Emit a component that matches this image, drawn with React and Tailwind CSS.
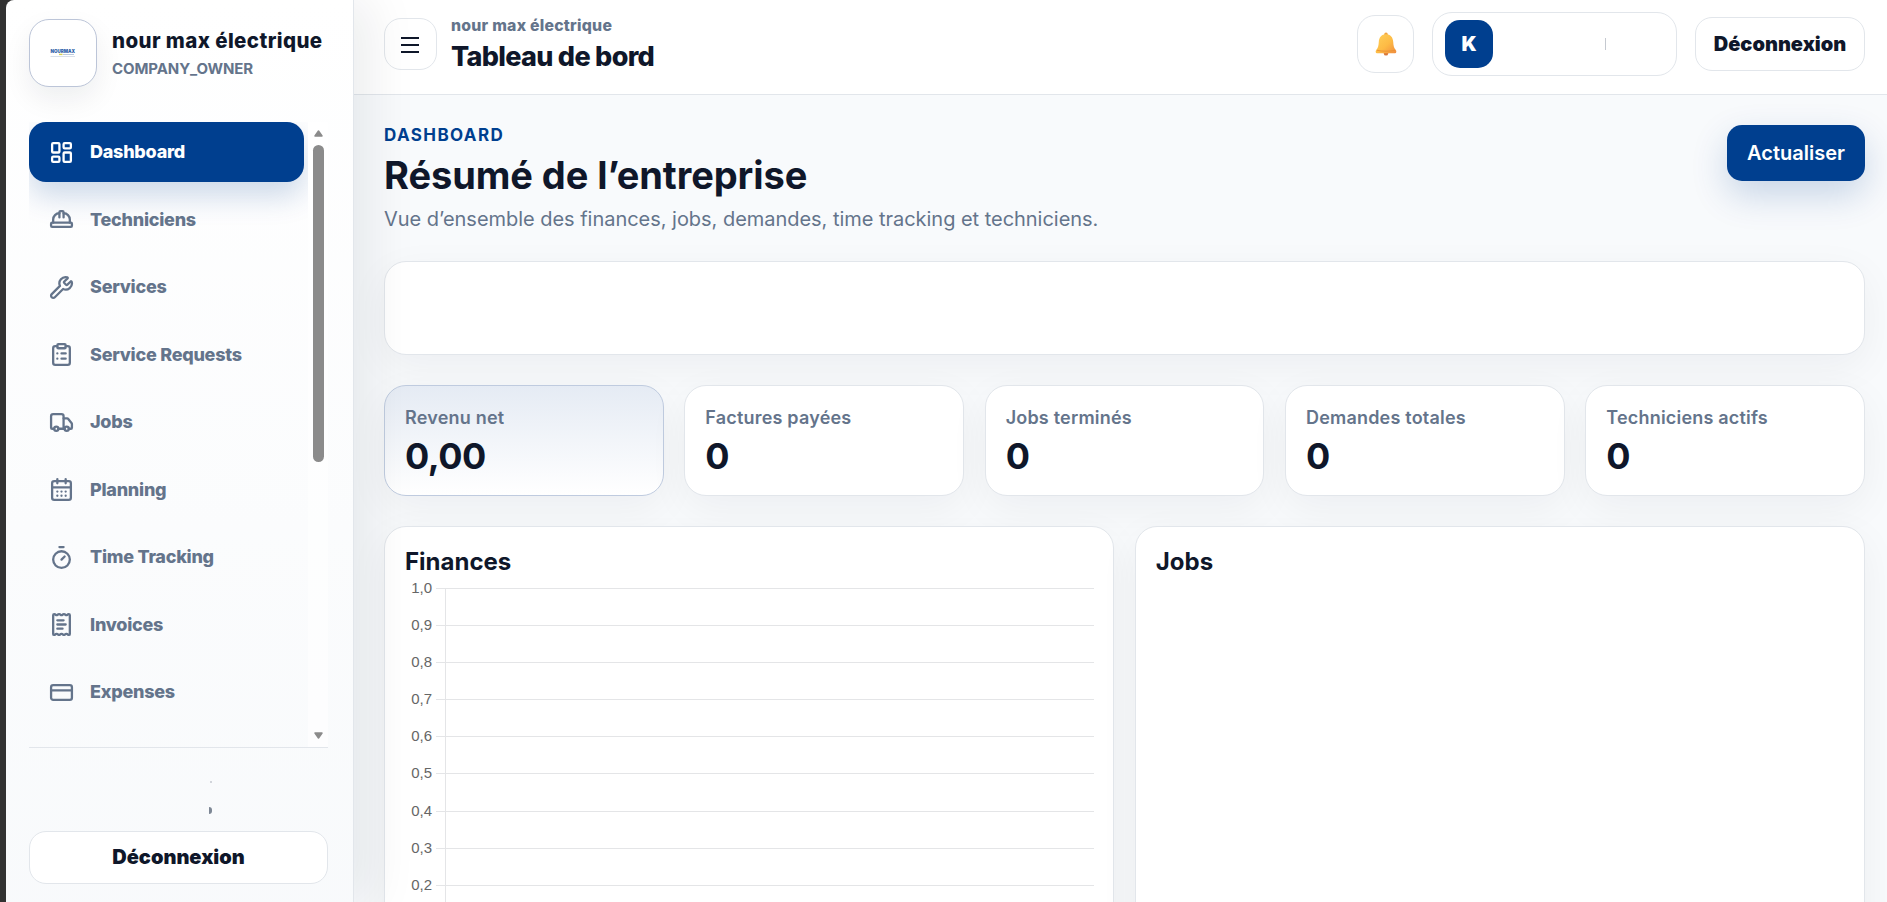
import {
  CalendarDays,
  ClipboardList,
  CreditCard,
  HardHat,
  LayoutDashboard,
  ReceiptText,
  Timer,
  Truck,
  Wrench,
} from 'lucide-react'

const NAV_ITEMS = [
  { label: 'Dashboard', icon: LayoutDashboard, active: true },
  { label: 'Techniciens', icon: HardHat },
  { label: 'Services', icon: Wrench },
  { label: 'Service Requests', icon: ClipboardList },
  { label: 'Jobs', icon: Truck },
  { label: 'Planning', icon: CalendarDays },
  { label: 'Time Tracking', icon: Timer },
  { label: 'Invoices', icon: ReceiptText },
  { label: 'Expenses', icon: CreditCard },
]

const STATS = [
  { label: 'Revenu net', value: '0,00', highlight: true },
  { label: 'Factures payées', value: '0' },
  { label: 'Jobs terminés', value: '0' },
  { label: 'Demandes totales', value: '0' },
  { label: 'Techniciens actifs', value: '0' },
]

const TICKS = ['1,0', '0,9', '0,8', '0,7', '0,6', '0,5', '0,4', '0,3', '0,2']

function CompanyLogo() {
  return (
    <svg width="28" height="16" viewBox="0 0 28 16">
      <text x="1.5" y="8.2" textLength="24.5" lengthAdjust="spacingAndGlyphs" fontSize="5" fontWeight="900" fill="#2f5fa8">
        NOURMAX
      </text>
      <path d="M10 9.400h3.500" stroke="#d5cf55" strokeWidth="1.4" />
      <path d="M14 9.500h11" stroke="#a9bcd6" strokeWidth="0.8" />
      <path d="M1.500 11.500h24.500" stroke="#cfd8e4" strokeWidth="0.8" />
    </svg>
  )
}

function BellIcon() {
  return (
    <svg width="22" height="24" viewBox="0 0 22 24">
      <defs>
        <linearGradient id="bell" x1="0" y1="0" x2="1" y2="1">
          <stop offset="0" stopColor="#ffd05a" />
          <stop offset="0.55" stopColor="#fdbb45" />
          <stop offset="1" stopColor="#f08c3e" />
        </linearGradient>
      </defs>
      <circle cx="11" cy="21.4" r="2.2" fill="#d9783a" />
      <circle cx="11" cy="2.4" r="1.8" fill="#f3a53f" />
      <path
        d="M11 2.200c-4.600 0-7 3.400-7.200 7.600-.2 4.200-.8 6.200-2.600 8.100-.9 1-.7 3.300.8 3.300h18c1.500 0 1.700-2.300.8-3.300-1.800-1.900-2.400-3.900-2.600-8.100C18 5.600 15.600 2.200 11 2.200z"
        fill="url(#bell)"
      />
      <path d="M2 18.300c5 1.200 13 1.200 18 0" stroke="#e98f35" strokeWidth="0.9" fill="none" />
    </svg>
  )
}

function Sidebar() {
  return (
    <aside className="relative z-10 flex w-[348px] shrink-0 flex-col rounded-tl-lg border-r border-[#e2e6eb] bg-gradient-to-b from-white to-slate-50 pl-[23px] pr-[25px] shadow-[16px_0_50px_rgba(15,23,42,0.08)]">
      <div className="flex items-center gap-[15px] pt-[19px]">
        <div className="flex size-[68px] shrink-0 items-center justify-center rounded-[20px] border border-[#bcc5d8] bg-white shadow-[0_12px_28px_rgba(15,23,42,0.07)]">
          <CompanyLogo />
        </div>
        <div className="whitespace-nowrap">
          <p className="text-[20.500px] font-extrabold leading-[27px] tracking-[0.400px] text-[#0f172a]">nour max électrique</p>
          <p className="mt-[4px] text-[15px] font-bold leading-[22px] tracking-[-0.100px] text-[#64748b]">COMPANY_OWNER</p>
        </div>
      </div>

      <div className="mt-[35px] flex h-[626px] border-b border-[#e2e6eb]">
        <nav className="flex h-full w-[279px] flex-col gap-[7.500px] overflow-hidden">
          {NAV_ITEMS.map(({ label, icon: Icon, active }) => (
            <a
              key={label}
              className={
                active
                  ? 'flex h-[60px] w-[275px] shrink-0 items-center gap-4 rounded-[17px] bg-[#003f8f] pl-5 text-white shadow-[0_14px_30px_rgba(0,63,143,0.2)]'
                  : 'flex h-[60px] w-[275px] shrink-0 items-center gap-4 rounded-[17px] pl-5 text-[#64748b]'
              }
            >
              <Icon size={25} strokeWidth={2.2} />
              <span className="-mt-px whitespace-nowrap text-[18px] font-extrabold tracking-[-0.250px]">{label}</span>
            </a>
          ))}
        </nav>
        <div className="flex w-5 flex-col items-center bg-white/60 pt-2">
          <svg width="9" height="7" viewBox="0 0 9 7" className="shrink-0">
            <path d="M4.500 1 8 6H1z" fill="#8b8b8b" stroke="#8b8b8b" strokeWidth="1.500" strokeLinejoin="round" />
          </svg>
          <div className="mt-2 h-[317px] w-[11px] shrink-0 rounded-full bg-[#8b8b8b]" />
          <svg width="9" height="7" viewBox="0 0 9 7" className="mb-2 mt-auto shrink-0">
            <path d="M4.500 6 8 1H1z" fill="#8b8b8b" stroke="#8b8b8b" strokeWidth="1.500" strokeLinejoin="round" />
          </svg>
        </div>
      </div>

      <div className="flex h-[83px] flex-col items-end gap-6 pr-[116px] pt-[33px]">
        <span className="size-[2px] rounded-full bg-[#c5c9d0]" />
        <span className="h-[7px] w-[3px] rounded-r-full bg-[#7d8795]" />
      </div>
      <button
        type="button"
        className="h-[53px] shrink-0 rounded-[17px] border border-[#e2e6eb] bg-white pb-0.5 text-[20px] font-black text-[#0f172a]"
      >
        Déconnexion
      </button>
    </aside>
  )
}

function Topbar() {
  return (
    <header className="flex h-[95px] shrink-0 items-start border-b border-[#e2e6eb] bg-white pl-[30px] pr-[22px]">
      <button
        type="button"
        aria-label="Menu"
        className="mt-[18px] flex h-[52px] w-[53px] flex-col items-center justify-center gap-[5px] rounded-[17px] border border-[#e2e6eb] bg-white pr-[2px] pt-px"
      >
        <span className="h-[2px] w-[18px] bg-[#0f172a]" />
        <span className="h-[2px] w-[18px] bg-[#0f172a]" />
        <span className="h-[2px] w-[18px] bg-[#0f172a]" />
      </button>
      <div className="ml-[14px] mt-[15px] whitespace-nowrap">
        <p className="text-[15.800px] font-extrabold leading-[22px] tracking-[0.250px] text-[#64748b]">nour max électrique</p>
        <h1 className="text-[27px] font-extrabold leading-[40px] tracking-[-0.700px] text-[#0f172a]">Tableau de bord</h1>
      </div>
      <div className="ml-auto flex h-[88px] items-center gap-[18px]">
        <button
          type="button"
          aria-label="Notifications"
          className="flex h-[58px] w-[57px] items-center justify-center rounded-[18px] border border-[#e2e6eb] bg-white"
        >
          <BellIcon />
        </button>
        <div className="flex h-16 w-[245px] items-center rounded-[20px] border border-[#e2e6eb] bg-white pl-3">
          <div className="flex size-12 items-center justify-center rounded-[15px] bg-[#003f8f] text-[20px] font-black text-white">
            K
          </div>
          <span className="ml-[112px] h-3 w-px bg-[#c5c9d0]" />
        </div>
        <button
          type="button"
          className="h-[54px] w-[170px] rounded-[17px] border border-[#e2e6eb] bg-white text-[20px] font-black text-[#0f172a]"
        >
          Déconnexion
        </button>
      </div>
    </header>
  )
}

function StatCard({ label, value, highlight }) {
  return (
    <div
      className={
        highlight
          ? 'h-[111px] rounded-[22px] border border-[#bfcbdf] bg-gradient-to-b from-[#e5ebf4] to-white px-5 pt-[19px] shadow-[0_12px_40px_rgba(15,23,42,0.05)]'
          : 'h-[111px] rounded-[22px] border border-[#e2e6eb] bg-white px-5 pt-[19px] shadow-[0_12px_40px_rgba(15,23,42,0.05)]'
      }
    >
      <p className="text-[18px] font-semibold leading-[26px] tracking-[0.200px] text-[#64748b]">{label}</p>
      <p className="mt-[4px] text-[36px] font-bold leading-[43px] tracking-[-0.500px] text-[#0f172a]">{value}</p>
    </div>
  )
}

function FinanceChart() {
  return (
    <div className="mt-[12px]">
      {TICKS.map((tick) => (
        <div key={tick} className="flex h-[37.100px]">
          <span className="w-[27px] -translate-y-[10px] text-right font-['Liberation_Sans',Arial,sans-serif] text-[15px] leading-5 text-[#666]">
            {tick}
          </span>
          <span className="ml-1 w-[9px] border-t border-[#e4e5e7]" />
          <span className="flex-1 border-l border-t border-[#e4e5e7]" />
        </div>
      ))}
    </div>
  )
}

function Panel({ title, children }) {
  return (
    <section className="h-[520px] rounded-[22px] border border-[#e2e6eb] bg-white pl-5 pr-[19px] pt-5 shadow-[0_12px_40px_rgba(15,23,42,0.05)]">
      <h3 className="text-[24px] font-bold leading-[29px] text-[#0f172a]">{title}</h3>
      {children}
    </section>
  )
}

export default function App() {
  return (
    <div className="flex h-screen w-full overflow-hidden bg-[#333] pl-[6px] font-['Inter',sans-serif] text-[#0f172a]">
      <Sidebar />
      <div className="flex min-w-0 flex-1 flex-col bg-slate-50">
        <Topbar />
        <main className="flex-1 overflow-hidden pl-[30px] pr-[22px] pt-[30px]">
          <div className="flex items-start justify-between">
            <div>
              <p className="text-[17px] font-bold leading-5 tracking-[1.400px] text-[#003f8f]">DASHBOARD</p>
              <h2 className="mt-[6px] text-[38px] font-bold leading-[49px] tracking-[-0.080px] text-[#0f172a]">
                Résumé de l’entreprise
              </h2>
              <p className="mt-[6px] text-[20px] leading-[26px] tracking-[-0.030px] text-[#64748b]">
                Vue d’ensemble des finances, jobs, demandes, time tracking et techniciens.
              </p>
            </div>
            <button
              type="button"
              className="h-14 w-[138px] rounded-[15px] bg-[#003f8f] text-[20px] font-semibold text-white shadow-[0_14px_36px_rgba(0,63,143,0.2)]"
            >
              Actualiser
            </button>
          </div>

          <div className="mt-[29px] h-[94px] rounded-[22px] border border-[#e2e6eb] bg-white shadow-[0_12px_40px_rgba(15,23,42,0.05)]" />

          <div className="mt-[30px] grid grid-cols-5 gap-[20.600px]">
            {STATS.map((stat) => (
              <StatCard key={stat.label} {...stat} />
            ))}
          </div>

          <div className="mt-[30px] grid grid-cols-2 gap-[20.600px]">
            <Panel title="Finances">
              <FinanceChart />
            </Panel>
            <Panel title="Jobs" />
          </div>
        </main>
      </div>
    </div>
  )
}
